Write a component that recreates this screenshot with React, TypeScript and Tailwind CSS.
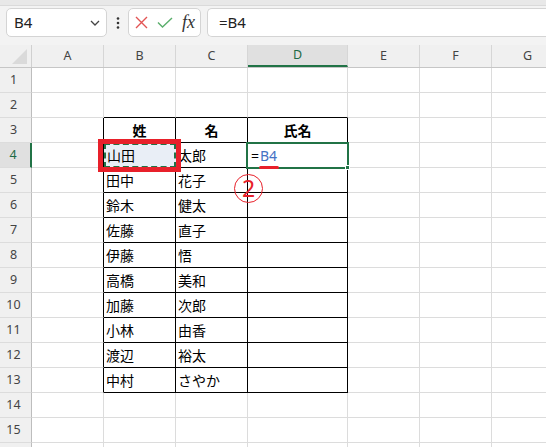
import React from 'react';

const cols = [
  { name: 'A', w: 72 },
  { name: 'B', w: 72 },
  { name: 'C', w: 72 },
  { name: 'D', w: 100 },
  { name: 'E', w: 72 },
  { name: 'F', w: 72 },
  { name: 'G', w: 72 },
];

const names: [string, string][] = [
  ['山田', '太郎'],
  ['田中', '花子'],
  ['鈴木', '健太'],
  ['佐藤', '直子'],
  ['伊藤', '悟'],
  ['高橋', '美和'],
  ['加藤', '次郎'],
  ['小林', '由香'],
  ['渡辺', '裕太'],
  ['中村', 'さやか'],
];

const rows = Array.from({ length: 15 }, (_, i) => i + 1);

function cellBorder(r: number, c: number) {
  // table range is B3:D13 (c 1..3, r 3..13)
  const inTable = r >= 3 && r <= 13 && c >= 1 && c <= 3;
  const right = inTable || (c === 0 && r >= 3 && r <= 13) ? 'border-r-black' : 'border-r-[#dcdcdc]';
  const bottom = inTable || (r === 2 && c >= 1 && c <= 3) ? 'border-b-black' : 'border-b-[#dcdcdc]';
  return `${right} ${bottom}`;
}

function cellText(r: number, c: number) {
  if (r === 3) {
    if (c === 1) return '姓';
    if (c === 2) return '名';
    if (c === 3) return '氏名';
  }
  if (r >= 4 && r <= 13) {
    const p = names[r - 4];
    if (c === 1) return p[0];
    if (c === 2) return p[1];
  }
  return '';
}

function Toolbar() {
  return (
    <div className="h-[39px] shrink-0 flex items-start pt-[2px]">
      {/* name box */}
      <div className="ml-[6px] w-[101px] h-[29px] bg-white border border-[#d4d4d4] rounded-[5px] flex items-center justify-between pl-[7px] pr-[6px]">
        <span className="text-[15px] text-[#222]">B4</span>
        <svg width="10" height="6" viewBox="0 0 10 6" fill="none">
          <path d="M1 1 L5 5 L9 1" stroke="#444" strokeWidth="1.3" />
        </svg>
      </div>
      {/* dots */}
      <div className="w-[21px] h-[29px] flex items-center justify-center">
        <svg width="4" height="12" viewBox="0 0 4 12">
          <circle cx="2" cy="1.5" r="1.3" fill="#333" />
          <circle cx="2" cy="6" r="1.3" fill="#333" />
          <circle cx="2" cy="10.5" r="1.3" fill="#333" />
        </svg>
      </div>
      {/* cancel / enter / fx */}
      <div className="w-[73px] h-[29px] bg-white border border-[#d4d4d4] rounded-[5px] flex items-center pl-[6px] gap-[9px]">
        <svg width="13" height="13" viewBox="0 0 13 13" fill="none">
          <path d="M1 1 L12 12 M12 1 L1 12" stroke="#e25454" strokeWidth="1.4" />
        </svg>
        <svg width="16" height="11" viewBox="0 0 16 11" fill="none">
          <path d="M1 5.5 L5.5 10 L15 1" stroke="#5aae6c" strokeWidth="1.4" />
        </svg>
        <span className="text-[18px] italic text-[#333] leading-none -mt-[2px]" style={{ fontFamily: '"Liberation Serif", serif' }}>
          fx
        </span>
      </div>
      {/* formula */}
      <div className="ml-[6px] flex-1 h-[29px] bg-white border border-[#d4d4d4] border-r-0 rounded-l-[5px] flex items-center pl-[11px]">
        <span className="text-[15px] text-[#222]">=B4</span>
      </div>
    </div>
  );
}

export default function App() {
  return (
    <div
      className="w-[546px] h-[447px] overflow-hidden bg-[#f3f3f3] flex flex-col"
      style={{ fontFamily: '"Noto Sans", "Noto Sans CJK JP", sans-serif' }}
    >
      <div className="h-[6px] shrink-0 bg-[#e8e8e8] border-b border-[#dadada]" />
      <Toolbar />

      {/* sheet */}
      <div className="relative shrink-0">
        {/* column headers */}
        <div className="flex h-[23px] border-b border-[#c6c6c6] bg-[#f0f0f0]">
          <div className="w-[32px] shrink-0 border-r border-[#d0d0d0] relative">
            <svg className="absolute right-[4px] bottom-[3px]" width="15" height="15" viewBox="0 0 15 15">
              <path d="M15 0 L15 15 L0 15 Z" fill="#dadada" />
            </svg>
          </div>
          {cols.map((c) => (
            <div
              key={c.name}
              style={{ width: c.w }}
              className={`shrink-0 flex items-center justify-center text-[12.5px] border-r border-[#d6d6d6] ${
                c.name === 'D' ? 'bg-[#e0e0e0] text-[#1d6a45] border-b-2 border-b-[#217346]' : 'text-[#444]'
              }`}
            >
              {c.name}
            </div>
          ))}
        </div>

        {/* rows */}
        {rows.map((r) => (
          <div key={r} className="flex h-[25px]">
            <div
              className={`w-[32px] shrink-0 flex items-center justify-center pr-[4px] text-[12.5px] border-b border-[#dcdcdc] ${
                r === 4
                  ? 'bg-[#e0e0e0] text-[#1d6a45] border-r-2 border-r-[#217346]'
                  : 'bg-[#f0f0f0] text-[#444] border-r border-r-[#bdbdbd]'
              }`}
            >
              {r}
            </div>
            {cols.map((c, ci) => {
              const t = cellText(r, ci);
              const header = r === 3;
              return (
                <div
                  key={c.name}
                  style={{ width: c.w }}
                  className={`shrink-0 bg-white border-r border-b flex items-center text-[14px] text-black ${cellBorder(r, ci)} ${
                    header ? 'justify-center font-bold' : 'pl-[2px]'
                  }`}
                >
                  {t}
                </div>
              );
            })}
          </div>
        ))}
        {/* partly visible next row */}
        <div className="flex h-[25px]">
          <div className="w-[32px] shrink-0 bg-[#f0f0f0] border-r border-r-[#bdbdbd]" />
          {cols.map((c) => (
            <div key={c.name} style={{ width: c.w }} className="shrink-0 bg-white border-r border-r-[#dcdcdc]" />
          ))}
        </div>

        {/* copy selection on B4 */}
        <div className="absolute left-[104px] top-[98px] w-[72px] h-[25px] bg-[#e9eef6] border-2 border-dashed border-[#217346] flex items-center pl-[1px] text-[14px] text-black">
          山田
        </div>
        {/* red highlight frame */}
        <div className="absolute left-[98px] top-[94px] w-[83px] h-[33px] border-[5px] border-[#e8202a]" />

        {/* active cell D4 */}
        <div className="absolute left-[246px] top-[97px] w-[103px] h-[27px] border-2 border-[#217346] flex items-center pl-[3px] text-[14px]">
          <span className="text-black mr-[1px]">=</span>
          <span className="text-[#4472c4]">B4</span>
          <div className="absolute -right-[3px] -bottom-[3px] w-[5px] h-[5px] bg-[#217346] border border-white" />
        </div>
        {/* red underline */}
        <div className="absolute left-[259px] top-[121px] w-[20px] h-[3px] rounded-full bg-[#e8202a]" />
        {/* circled 2 */}
        <div className="absolute left-[234px] top-[129px] w-[29px] h-[29px] rounded-full border-[1.5px] border-[#e8202a] flex items-center justify-center text-[23px] leading-none text-[#e8202a]">
          2
        </div>
      </div>
    </div>
  );
}
